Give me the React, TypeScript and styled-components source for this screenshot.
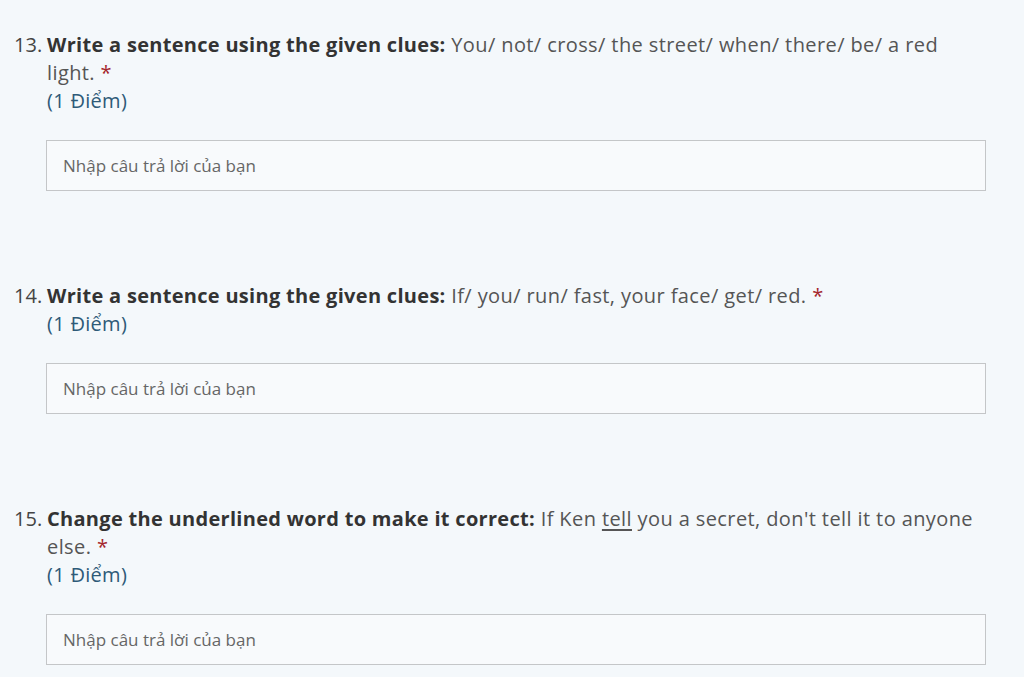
import styled, { createGlobalStyle } from 'styled-components';

const GlobalStyle = createGlobalStyle`
  html, body {
    margin: 0;
    padding: 0;
    background: #f4f8fb;
  }
  body {
    font-family: "Open Sans", "Noto Sans", sans-serif;
    color: #333;
  }
`;

type Question = {
  num: number;
  label: string;
  text: React.ReactNode;
};

const questions: Question[] = [
  {
    num: 13,
    label: 'Write a sentence using the given clues:',
    text: ' You/ not/ cross/ the street/ when/ there/ be/ a red light.',
  },
  {
    num: 14,
    label: 'Write a sentence using the given clues:',
    text: ' If/ you/ run/ fast, your face/ get/ red.',
  },
  {
    num: 15,
    label: 'Change the underlined word to make it correct:',
    text: (
      <>
        {' If Ken '}
        <u>tell</u>
        {" you a secret, don't tell it to anyone else."}
      </>
    ),
  },
];

export default function App() {
  return (
    <Page>
      <GlobalStyle />
      {questions.map((q) => (
        <Block key={q.num}>
          <Num>{q.num}.</Num>
          <Body>
            <Title>
              <b>{q.label}</b>
              {q.text}
              <Star> *</Star>
            </Title>
            <Points>(1 Điểm)</Points>
            <Answer placeholder="Nhập câu trả lời của bạn" />
          </Body>
        </Block>
      ))}
    </Page>
  );
}

const Page = styled.div`
  padding: 31px 38px 0 14px;
  display: flex;
  flex-direction: column;
  gap: 91px;
`;

const Block = styled.div`
  display: flex;
  font-size: 20px;
  line-height: 28px;
`;

const Num = styled.div`
  width: 33px;
  flex-shrink: 0;
  color: #444;
`;

const Body = styled.div`
  flex: 1;
  display: flex;
  flex-direction: column;
`;

const Title = styled.div`
  color: #555;
  letter-spacing: 0.4px;
  b {
    color: #333;
    font-weight: 700;
    letter-spacing: 0.3px;
  }
  u {
    text-underline-offset: 3px;
  }
`;

const Star = styled.span`
  color: #a4262c;
`;

const Points = styled.div`
  color: #2e5a78;
  letter-spacing: 0.3px;
`;

const Answer = styled.input`
  margin-top: 25px;
  margin-left: -1px;
  height: 51px;
  box-sizing: border-box;
  border: 1px solid #c4c6c8;
  background: #f8fafc;
  padding: 0 16px;
  font-family: "Open Sans", "Noto Sans", sans-serif;
  font-size: 17px;
  color: #333;
  outline: none;
  &::placeholder {
    color: #666;
  }
`;
